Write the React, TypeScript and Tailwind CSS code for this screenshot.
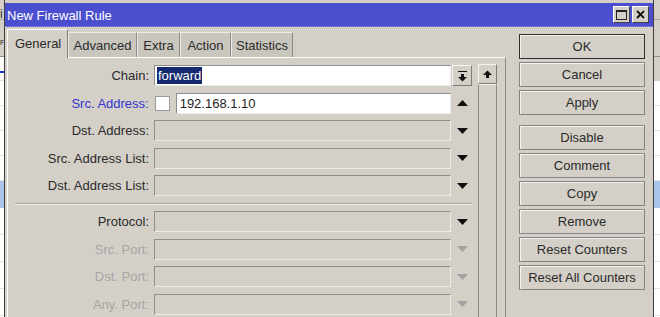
import type React from "react"

const rows: { label: string; tone: "normal" | "blue" | "off"; kind: "chain" | "src" | "down" }[] = [
  { label: "Chain:", tone: "normal", kind: "chain" },
  { label: "Src. Address:", tone: "blue", kind: "src" },
  { label: "Dst. Address:", tone: "normal", kind: "down" },
  { label: "Src. Address List:", tone: "normal", kind: "down" },
  { label: "Dst. Address List:", tone: "normal", kind: "down" },
]

const rows2: { label: string; off: boolean }[] = [
  { label: "Protocol:", off: false },
  { label: "Src. Port:", off: true },
  { label: "Dst. Port:", off: true },
  { label: "Any. Port:", off: true },
]

const tabs = [
  { name: "Advanced", w: "w-[69px]" },
  { name: "Extra", w: "w-[43px]" },
  { name: "Action", w: "w-[51px]" },
  { name: "Statistics", w: "w-[62px]" },
]

const Tri = ({ up, color }: { up?: boolean; color: string }) => (
  <svg width="11" height="6" viewBox="0 0 11 6">
    <polygon points={up ? "5.5,0 11,6 0,6" : "0,0 11,0 5.5,6"} fill={color} />
  </svg>
)

function Field({ white, children, className = "" }: { white?: boolean; children?: React.ReactNode; className?: string }) {
  return (
    <div
      className={`h-[21px] border border-t-[#8d8d8d] border-l-[#8d8d8d] border-b-[#ececec] border-r-[#ececec] flex items-center ${
        white ? "bg-white" : "bg-[#d4d0c8]"
      } ${className}`}
    >
      {children}
    </div>
  )
}

function Btn({ label, main }: { label: string; main?: boolean }) {
  return (
    <div
      className={`h-[25px] flex items-center justify-center border ${
        main ? "border-[#2e2e2e]" : "border-[#858585]"
      } shadow-[inset_1px_1px_0_#f4f3f0] text-[#2a2a2a]`}
    >
      {label}
    </div>
  )
}

function Strip({ right }: { right?: boolean }) {
  return (
    <div className={`${right ? "w-[6px]" : "w-[4px]"} h-full flex flex-col bg-white overflow-hidden`}>
      <div className="h-[20px] bg-[#d4d0c8] border-b border-[#a9a9a9] text-[12px] text-[#333] leading-[28px]">{right ? "" : "i"}</div>
      <div className="h-[37px] bg-[#d4d0c8] border-b border-[#8e8e8e] text-[#222] text-[7px] leading-[46px]">{right ? "" : "F"}</div>
      <div className={`h-[24px] ${right ? "bg-[#d4d0c8]" : "bg-white border-b border-[#ddd]"}`}>
        {!right && <div className="mt-[14px] h-[2px] bg-[#1a32c8]" />}
      </div>
      {[0, 1, 2, 3].map((i) => (
        <div key={i} className="h-[25px] border-b border-[#e2e2e2]" />
      ))}
      <div className="h-[27px] bg-[#a9c6ea]" />
      {[0, 1, 2, 3].map((i) => (
        <div key={i} className="h-[27px] border-b border-[#e2e2e2]" />
      ))}
    </div>
  )
}

export default function App() {
  return (
    <div className="flex w-[660px] h-[317px] overflow-hidden bg-white font-['Liberation_Sans',Arial,sans-serif] text-[13px] leading-none">
      <Strip />
      <div className="w-[650px] h-full flex flex-col bg-[#d4d0c8] border-l border-r border-[#3f3f3f] pt-[3px]">
        {/* title bar */}
        <div className="h-[24px] bg-[#4b4fcf] border-b border-dotted border-[#8b8ee4] flex items-center pl-[2px] pr-[4px]">
          <span className="text-white text-[13px] mt-[2px]">New Firewall Rule</span>
          <div className="ml-auto flex gap-[2px]">
            <div className="w-[17px] h-[17px] bg-[#d4d0c8] border border-t-white border-l-white border-r-[#404040] border-b-[#404040] flex items-center justify-center">
              <div className="w-[11px] h-[10px] border border-[#222] border-t-[2px]" />
            </div>
            <div className="w-[17px] h-[17px] bg-[#d4d0c8] border border-t-white border-l-white border-r-[#404040] border-b-[#404040] flex items-center justify-center">
              <svg width="9" height="9" viewBox="0 0 9 9">
                <path d="M1 1L8 8M8 1L1 8" stroke="#111" strokeWidth="1.8" />
              </svg>
            </div>
          </div>
        </div>

        {/* body */}
        <div className="flex-1 flex pl-[2px]">
          <div className="w-[499px] flex flex-col">
            {/* tabs */}
            <div className="h-[30px] flex items-end">
              <div className="w-[61px] h-[29px] -mb-[1px] relative z-10 bg-[#d4d0c8] border-t border-l border-white border-r border-r-[#808080] flex items-center pl-[7px] pb-[2px] text-[#2a2a2a]">
                General
              </div>
              {tabs.map((t) => (
                <div
                  key={t.name}
                  className={`${t.w} h-[25px] bg-[#c9c6be] border-t border-l border-[#ecebe8] border-r border-r-[#8a8a8a] flex items-center justify-center text-[#2a2a2a]`}
                >
                  {t.name}
                </div>
              ))}
            </div>

            {/* panel */}
            <div className="flex-1 flex border-t border-l border-white border-r border-r-[#8a8a8a]">
              <div className="w-[464px] pt-[7px] flex flex-col gap-[6.5px]">
                {rows.map((r) => (
                  <div key={r.label} className="h-[21px] flex items-center">
                    <div
                      className={`w-[141px] text-right ${
                        r.tone === "blue" ? "text-[#3434d0]" : "text-[#2a2a2a]"
                      }`}
                    >
                      {r.label}
                    </div>
                    {r.kind === "chain" && (
                      <>
                        <Field white className="ml-[5px] w-[297px] pl-[2px]">
                          <span className="bg-[#132a6e] text-white px-[1px] py-[2px]">forward</span>
                        </Field>
                        <div className="ml-[1px] w-[20px] h-[21px] border border-t-[#f4f4f4] border-l-[#f4f4f4] border-r-[#7c7c7c] border-b-[#7c7c7c] flex items-center justify-center">
                          <svg width="11" height="12" viewBox="0 0 11 12">
                            <rect x="1" y="1" width="9" height="1" fill="#111" />
                            <rect x="4" y="4" width="3" height="3" fill="#111" />
                            <polygon points="1,7 10,7 5.5,11.5" fill="#111" />
                          </svg>
                        </div>
                      </>
                    )}
                    {r.kind === "src" && (
                      <>
                        <div className="ml-[6px] w-[15px] h-[15px] bg-white border border-[#9a9a9a]" />
                        <Field white className="ml-[6px] w-[276px] pl-[3px] text-[#1e1e1e]">
                          192.168.1.10
                        </Field>
                        <div className="ml-[1px] w-[20px] flex justify-center">
                          <Tri up color="#111" />
                        </div>
                      </>
                    )}
                    {r.kind === "down" && (
                      <>
                        <Field className="ml-[5px] w-[297px]" />
                        <div className="ml-[1px] w-[20px] flex justify-center">
                          <Tri color="#111" />
                        </div>
                      </>
                    )}
                  </div>
                ))}

                <div className="ml-[7px] w-[457px] h-[2px] border-t border-[#a9a6a0] border-b border-b-[#f2f1ee]" />

                {rows2.map((r) => (
                  <div key={r.label} className="h-[21px] flex items-center">
                    <div className={`w-[141px] text-right ${r.off ? "text-[#a6a6a6]" : "text-[#2a2a2a]"}`}>{r.label}</div>
                    <Field className="ml-[5px] w-[297px]" />
                    <div className="ml-[1px] w-[20px] flex justify-center">
                      <Tri color={r.off ? "#a3a3a3" : "#111"} />
                    </div>
                  </div>
                ))}
              </div>

              {/* scrollbar */}
              <div className="ml-[6px] w-[19px] pt-[6px] flex flex-col">
                <div className="h-[20px] border border-t-[#f4f4f4] border-l-[#f4f4f4] border-r-[#7c7c7c] border-b-[#7c7c7c] flex items-center justify-center">
                  <svg width="9" height="9" viewBox="0 0 9 9">
                    <polygon points="4.5,0.5 9,5 0,5" fill="#111" />
                    <rect x="3" y="5" width="3" height="3" fill="#111" />
                  </svg>
                </div>
                <div className="flex-1 border border-t-[#f4f4f4] border-l-[#8a8a8a] border-r-[#8a8a8a] border-b-0" />
              </div>
            </div>
          </div>

          {/* buttons */}
          <div className="ml-[13px] mt-[7px] w-[126px] flex flex-col gap-[3px]">
            <Btn label="OK" main />
            <Btn label="Cancel" />
            <Btn label="Apply" />
            <div className="h-[4px]" />
            <Btn label="Disable" />
            <Btn label="Comment" />
            <Btn label="Copy" />
            <Btn label="Remove" />
            <Btn label="Reset Counters" />
            <Btn label="Reset All Counters" />
          </div>
        </div>
      </div>
      <Strip right />
    </div>
  )
}
